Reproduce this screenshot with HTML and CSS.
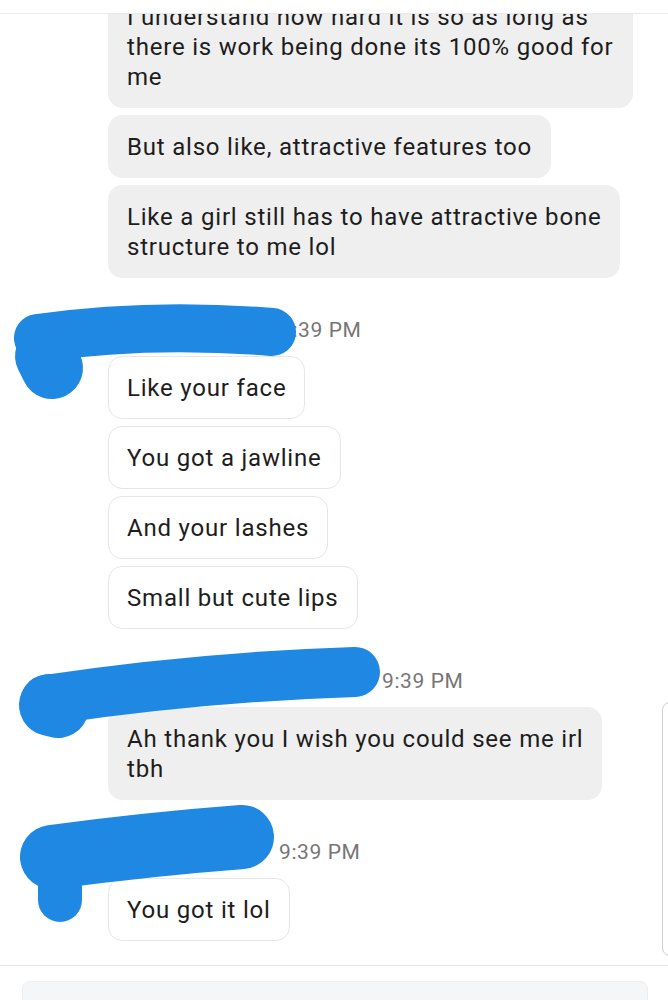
FILE: index.html
```html
<!DOCTYPE html>
<html lang="en">
<head>
  <meta charset="UTF-8" />
  <title>Messages</title>
  <link rel="stylesheet" href="styles.css">
</head>
<body>
  <div class="app">
    <div class="topbar"></div>

    <div class="chat">
      <div class="thread">
        <div class="group group-first">
          <div class="bubble gray">I understand how hard it is so as long as<br>there is work being done its 100% good for<br>me</div>
          <div class="bubble gray">But also like, attractive features too</div>
          <div class="bubble gray">Like a girl still has to have attractive bone<br>structure to me lol</div>
        </div>

        <div class="group">
          <svg class="scribble" width="400" height="120" viewBox="0 0 400 120">
            <path d="M38 22 Q150 6 272 16" />
            <path d="M46 40 L52 52" class="fat" />
          </svg>
          <div class="meta"><span class="who who-a"></span><span class="time">9:39 PM</span></div>
          <div class="bubble white">Like your face</div>
          <div class="bubble white">You got a jawline</div>
          <div class="bubble white">And your lashes</div>
          <div class="bubble white">Small but cute lips</div>
        </div>

        <div class="group">
          <svg class="scribble" width="400" height="120" viewBox="0 0 400 120">
            <path d="M46 33 Q200 10 355 5" class="band" />
            <path d="M50 38 L58 40" class="fat" />
          </svg>
          <div class="meta"><span class="who who-b"></span><span class="time">9:39 PM</span></div>
          <div class="bubble gray">Ah thank you I wish you could see me irl<br>tbh</div>
        </div>

        <div class="group">
          <svg class="scribble" width="400" height="120" viewBox="0 0 400 120">
            <path d="M52 19 Q150 6 242 -1" class="wide" />
            <path d="M60 31 L60 62" class="tail" />
          </svg>
          <div class="meta"><span class="who who-c"></span><span class="time">9:39 PM</span></div>
          <div class="bubble white">You got it lol</div>
        </div>
      </div>
    </div>

    <div class="composer">
      <div class="input"></div>
    </div>

    <div class="edge"></div>
  </div>
</body>
</html>
```

FILE: styles.css
```css
html, body {
  margin: 0;
  padding: 0;
  background: #ffffff;
}
body {
  font-family: Roboto, 'Noto Sans', sans-serif;
  color: #1d1d1d;
}
.app {
  position: relative;
  height: 1000px;
  display: flex;
  flex-direction: column;
  overflow: hidden;
}
.topbar {
  height: 13px;
  flex: none;
  background: #ffffff;
  border-bottom: 1px solid #e9e9e9;
}
.chat {
  flex: 1;
  overflow: hidden;
}
.thread {
  margin-top: -29px;
}
.group {
  position: relative;
  margin-top: 38px;
  display: flex;
  flex-direction: column;
  align-items: flex-start;
  gap: 7px;
}
.group-first {
  margin-top: 0;
}
.bubble {
  margin-left: 108px;
  padding: 16px 18px 15px 18px;
  border: 1px solid transparent;
  border-radius: 14px;
  font-size: 24px;
  line-height: 30px;
  letter-spacing: 0.8px;
  white-space: nowrap;
}
.gray {
  background: #efefef;
  border-color: #efefef;
}
.white {
  background: #ffffff;
  border-color: #e6e6e6;
}
.meta {
  display: flex;
  height: 28px;
  line-height: 28px;
  margin-left: 108px;
  margin-bottom: 5px;
}
.who-a {
  width: 172px;
}
.who-b {
  width: 274px;
}
.who-c {
  width: 171px;
}
.time {
  font-size: 21px;
  letter-spacing: 0.6px;
  color: #767676;
}
.scribble {
  position: absolute;
  left: 0;
  top: 0;
  overflow: visible;
  z-index: 2;
}
.scribble path {
  fill: none;
  stroke: #1f88e3;
  stroke-width: 48;
  stroke-linecap: round;
  stroke-linejoin: round;
}
.scribble path.band {
  stroke-width: 50;
}
.scribble path.fat {
  stroke-width: 62;
}
.scribble path.wide {
  stroke-width: 64;
}
.scribble path.tail {
  stroke-width: 44;
}
.composer {
  height: 19px;
  flex: none;
  border-top: 1px solid #e6e6e6;
  padding: 15px 20px 0 22px;
}
.input {
  height: 60px;
  background: #f5f6f7;
  border: 1px solid #eceef0;
  border-radius: 8px;
}
.edge {
  position: absolute;
  top: 702px;
  right: -12px;
  width: 16px;
  height: 252px;
  border: 1px solid #cfcfcf;
  border-radius: 8px;
  background: #ffffff;
}
```
